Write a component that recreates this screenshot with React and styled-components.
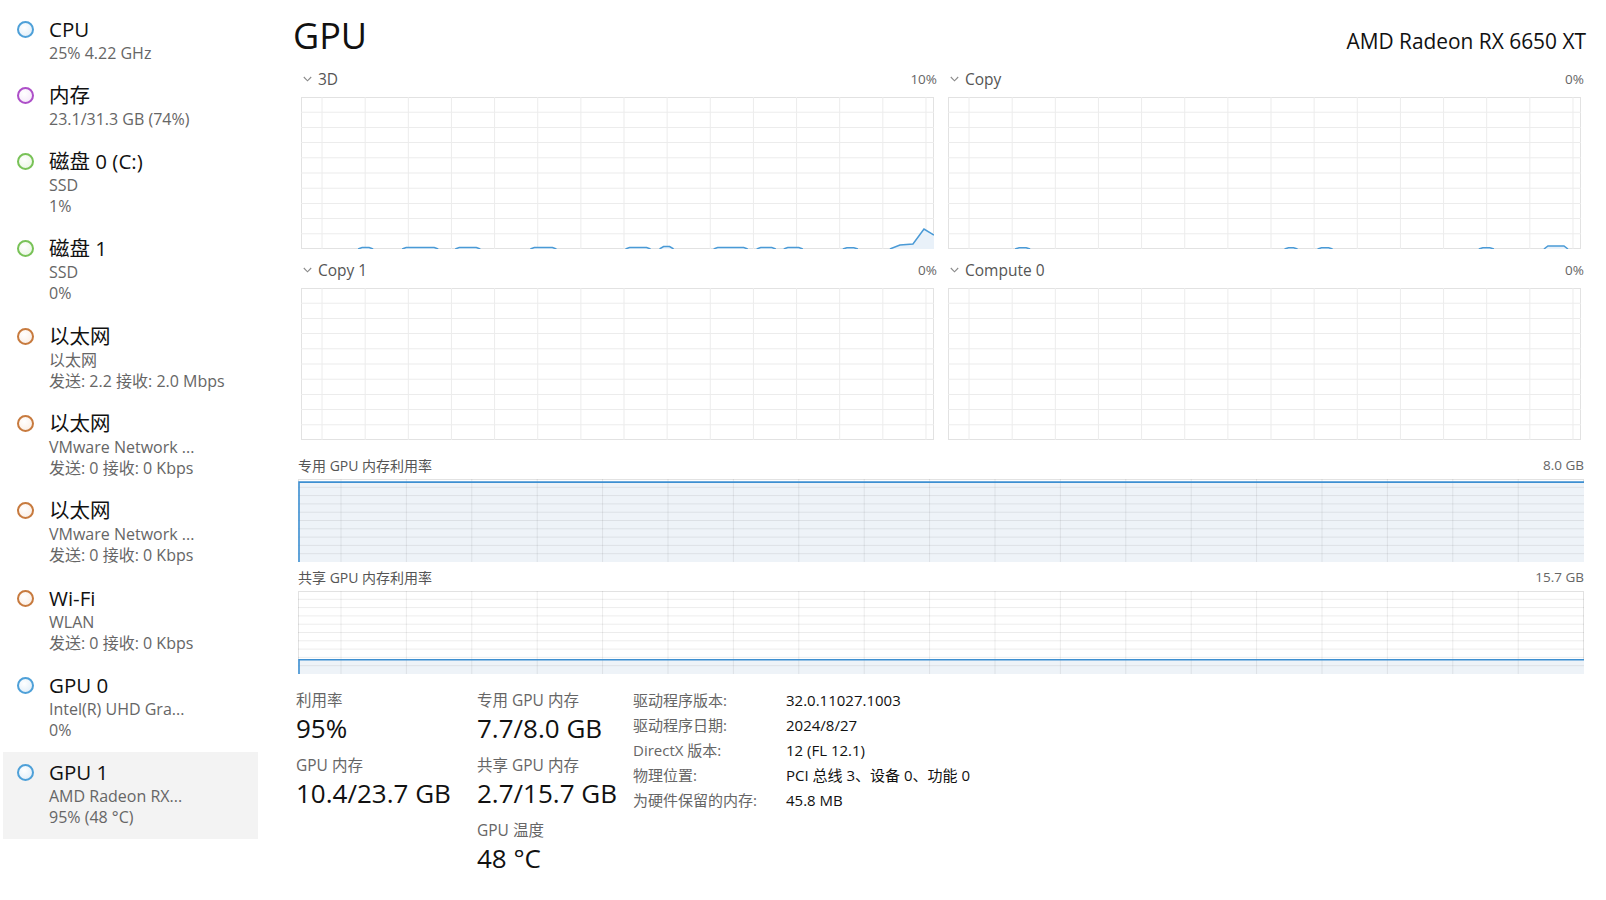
import React from 'react';
import styled, { createGlobalStyle } from 'styled-components';

const FONT = `"Open Sans", "Noto Sans CJK SC", sans-serif`;

const Global = createGlobalStyle`
  html, body { margin: 0; padding: 0; background: #fff; }
  body { font-family: ${FONT}; color: #1a1a1a; }
  * { box-sizing: border-box; }
`;

const Page = styled.div`
  display: flex;
  width: 1606px;
  height: 900px;
  overflow: hidden;
`;

/* ---------- Sidebar ---------- */
const Sidebar = styled.nav`
  width: 258px;
  flex: none;
  padding-top: 8.5px;
  display: flex;
  flex-direction: column;
`;

const Item = styled.div`
  display: flex;
  gap: 15px;
  margin-left: 3px;
  padding: 9px 0 11.3px 14px;
  background: ${(p) => (p.$active ? '#f3f3f3' : 'transparent')};
`;

const Ring = styled.span`
  flex: none;
  width: 17px;
  height: 17px;
  margin-top: 3px;
  border-radius: 50%;
  border: 2px solid ${(p) => p.$stroke};
  background: radial-gradient(circle at 40% 35%, #ffffff 0%, ${(p) => p.$fill} 80%);
`;

const ItemText = styled.div`
  display: flex;
  flex-direction: column;
  min-width: 0;
`;

const ItemTitle = styled.div`
  font-size: 20.5px;
  line-height: 23px;
  color: #111;
  white-space: nowrap;
  margin-bottom: 2px;
`;

const ItemSub = styled.div`
  font-size: 16px;
  line-height: 21px;
  color: #666;
  white-space: nowrap;
`;

/* ---------- Main ---------- */
const Main = styled.main`
  flex: 1;
  min-width: 0;
  padding: 12px 22px 0 40px;
  display: flex;
  flex-direction: column;
`;

const Header = styled.header`
  display: flex;
  justify-content: space-between;
  align-items: baseline;
  height: 58px;
`;

const Title = styled.h1`
  margin: 0 0 0 -5px;
  font-size: 36px;
  line-height: 48px;
  font-weight: 400;
  color: #111;
`;

const DeviceName = styled.div`
  font-size: 20.9px;
  line-height: 28px;
  color: #111;
  margin-right: -2px;
`;

const PanelGrid = styled.div`
  display: grid;
  grid-template-columns: 1fr 1fr;
  column-gap: 11px;
  row-gap: 12px;
  padding-left: 3px;
`;

const Panel = styled.section`
  display: flex;
  flex-direction: column;
`;

const PanelHead = styled.div`
  display: flex;
  align-items: center;
  height: 18px;
  margin-bottom: 9px;
`;

const Chevron = styled.svg`
  width: 9px;
  height: 6px;
  margin-left: 2px;
  margin-right: 6px;
  flex: none;
`;

const PanelName = styled.span`
  font-size: 15.5px;
  color: #555;
  line-height: 18px;
`;

const PanelPct = styled.span`
  margin-left: auto;
  font-size: 13.5px;
  color: #666;
  line-height: 18px;
`;

const ChartBox = styled.div`
  height: ${(p) => p.$h}px;
  margin-right: ${(p) => p.$mr || 0}px;
  svg { display: block; width: 100%; height: 100%; }
`;

const MemHead = styled.div`
  display: flex;
  align-items: center;
  justify-content: space-between;
  height: 18px;
  margin-top: ${(p) => p.$mt}px;
  margin-bottom: 5px;
`;

const MemLabel = styled.span`
  font-size: 14px;
  color: #555;
`;

const MemMax = styled.span`
  font-size: 13.5px;
  color: #666;
`;

/* ---------- Stats ---------- */
const Stats = styled.div`
  display: flex;
  margin-top: 16px;
  margin-left: -2px;
`;

const StatCol = styled.div`
  width: ${(p) => p.$w}px;
  flex: none;
  display: flex;
  flex-direction: column;
`;

const Stat = styled.div`
  margin-bottom: 9px;
`;

const StatLabel = styled.div`
  font-size: 15.5px;
  line-height: 20px;
  color: #666;
  white-space: nowrap;
`;

const StatValue = styled.div`
  font-size: 26px;
  line-height: 36px;
  color: #111;
  white-space: nowrap;
`;

const Details = styled.div`
  display: grid;
  grid-template-columns: 153px auto;
  grid-auto-rows: 24.9px;
  align-items: center;
  margin-top: -2.5px;
`;

const DetailLabel = styled.span`
  font-size: 15px;
  color: #666;
  white-space: nowrap;
`;

const DetailValue = styled.span`
  font-size: 15px;
  color: #111;
  white-space: nowrap;
`;

/* ---------- Charts ---------- */
const GRID = '#ececec';
const LINE = '#4a9ad6';
const FILL = '#e9f1f9';

function SmallChart({ bumps = [], peak }) {
  const W = 632;
  const H = 152;
  const vs = [];
  for (let x = 21; x < W - 2; x += 43.07) vs.push(x);
  const hs = [];
  for (let k = 1; k < 10; k++) hs.push((H / 10) * k);
  return (
    <svg viewBox={`0 0 ${W} ${H}`} preserveAspectRatio="none">
      <rect x="0.5" y="0.5" width={W - 1} height={H - 1} fill="#fff" stroke="#e2e2e2" />
      {vs.map((x) => (
        <line key={'v' + x} x1={x} x2={x} y1="0" y2={H} stroke={GRID} strokeWidth="1" />
      ))}
      {hs.map((y) => (
        <line key={'h' + y} x1="0" x2={W} y1={y} y2={y} stroke={GRID} strokeWidth="1" />
      ))}
      {bumps.map(([a, b, h], i) => {
        const pts = `${a},${H} ${a + 4},${H - h} ${b - 4},${H - h} ${b},${H}`;
        return (
          <g key={i}>
            <polygon points={pts} fill={FILL} />
            <polyline points={pts} fill="none" stroke={LINE} strokeWidth="1.5" />
          </g>
        );
      })}
      {peak && (
        <g>
          <polygon points={`${peak.map((p) => p.join(',')).join(' ')} ${W},${H}`} fill={FILL} />
          <polyline points={peak.map((p) => p.join(',')).join(' ')} fill="none" stroke={LINE} strokeWidth="1.5" />
        </g>
      )}
    </svg>
  );
}

function MemChart({ ratio }) {
  const W = 1286;
  const H = 83;
  const vs = [];
  for (let x = 43; x < W - 2; x += 65.4) vs.push(x);
  const hs = [];
  for (let k = 1; k < 10; k++) hs.push((H / 10) * k);
  const y = H - H * ratio;
  return (
    <svg viewBox={`0 0 ${W} ${H}`} preserveAspectRatio="none">
      <rect x="0.5" y="0.5" width={W - 1} height={H - 1} fill="#fff" stroke="#e2e2e2" />
      <rect x="0" y={y} width={W} height={H - y} fill="#eef3f8" />
      {vs.map((x) => (
        <line key={'v' + x} x1={x} x2={x} y1="0" y2={H} stroke="rgba(0,0,0,0.075)" strokeWidth="1" />
      ))}
      {hs.map((yy) => (
        <line key={'h' + yy} x1="0" x2={W} y1={yy} y2={yy} stroke="rgba(0,0,0,0.075)" strokeWidth="1" />
      ))}
      <polyline points={`1,${H} 1,${y} ${W},${y}`} fill="none" stroke="#3d8fd1" strokeWidth="1.6" />
    </svg>
  );
}

function ChevronIcon() {
  return (
    <Chevron viewBox="0 0 9 6">
      <polyline points="0.8,1 4.5,4.8 8.2,1" fill="none" stroke="#8a8a8a" strokeWidth="1.1" />
    </Chevron>
  );
}

/* ---------- Data ---------- */
const BLUE = ['#4ea0d8', '#e3eff9'];
const PURPLE = ['#ad4fc8', '#f5eafa'];
const GREEN = ['#78c257', '#ebf7e5'];
const ORANGE = ['#c77a3e', '#fbefe6'];

const items = [
  { c: BLUE, t: 'CPU', s: ['25% 4.22 GHz'] },
  { c: PURPLE, t: '内存', s: ['23.1/31.3 GB (74%)'] },
  { c: GREEN, t: '磁盘 0 (C:)', s: ['SSD', '1%'] },
  { c: GREEN, t: '磁盘 1', s: ['SSD', '0%'] },
  { c: ORANGE, t: '以太网', s: ['以太网', '发送: 2.2 接收: 2.0 Mbps'] },
  { c: ORANGE, t: '以太网', s: ['VMware Network ...', '发送: 0 接收: 0 Kbps'] },
  { c: ORANGE, t: '以太网', s: ['VMware Network ...', '发送: 0 接收: 0 Kbps'] },
  { c: ORANGE, t: 'Wi-Fi', s: ['WLAN', '发送: 0 接收: 0 Kbps'] },
  { c: BLUE, t: 'GPU 0', s: ['Intel(R) UHD Gra...', '0%'] },
  { c: BLUE, t: 'GPU 1', s: ['AMD Radeon RX...', '95% (48 °C)'], active: true },
];

const panels = [
  {
    name: '3D',
    pct: '10%',
    bumps: [
      [57, 72, 1.5], [101, 137, 1.5], [154, 179, 1.5], [229, 255, 1.5], [324, 349, 1.5],
      [358, 372, 2.5], [412, 446, 1.5], [455, 474, 1.5], [482, 501, 1.5], [541, 556, 1.2],
    ],
    peak: [[588, 152], [598, 148], [611, 147], [622, 132], [632, 138]],
  },
  {
    name: 'Copy',
    pct: '0%',
    bumps: [[67, 82, 1.2], [336, 349, 1.2], [369, 384, 1.2], [530, 545, 1.2], [595, 619, 3]],
  },
  { name: 'Copy 1', pct: '0%', bumps: [] },
  { name: 'Compute 0', pct: '0%', bumps: [] },
];

const details = [
  ['驱动程序版本:', '32.0.11027.1003'],
  ['驱动程序日期:', '2024/8/27'],
  ['DirectX 版本:', '12 (FL 12.1)'],
  ['物理位置:', 'PCI 总线 3、设备 0、功能 0'],
  ['为硬件保留的内存:', '45.8 MB'],
];

export default function App() {
  return (
    <>
      <Global />
      <Page>
        <Sidebar>
          {items.map((it, i) => (
            <Item key={i} $active={it.active}>
              <Ring $stroke={it.c[0]} $fill={it.c[1]} />
              <ItemText>
                <ItemTitle>{it.t}</ItemTitle>
                {it.s.map((s, j) => (
                  <ItemSub key={j}>{s}</ItemSub>
                ))}
              </ItemText>
            </Item>
          ))}
        </Sidebar>

        <Main>
          <Header>
            <Title>GPU</Title>
            <DeviceName>AMD Radeon RX 6650 XT</DeviceName>
          </Header>

          <PanelGrid>
            {panels.map((p) => (
              <Panel key={p.name}>
                <PanelHead>
                  <ChevronIcon />
                  <PanelName>{p.name}</PanelName>
                  <PanelPct>{p.pct}</PanelPct>
                </PanelHead>
                <ChartBox $h={152} $mr={3}>
                  <SmallChart bumps={p.bumps} peak={p.peak} />
                </ChartBox>
              </Panel>
            ))}
          </PanelGrid>

          <MemHead $mt={16}>
            <MemLabel>专用 GPU 内存利用率</MemLabel>
            <MemMax>8.0 GB</MemMax>
          </MemHead>
          <ChartBox $h={83}>
            <MemChart ratio={7.7 / 8.0} />
          </ChartBox>

          <MemHead $mt={6}>
            <MemLabel>共享 GPU 内存利用率</MemLabel>
            <MemMax>15.7 GB</MemMax>
          </MemHead>
          <ChartBox $h={83}>
            <MemChart ratio={2.7 / 15.7} />
          </ChartBox>

          <Stats>
            <StatCol $w={181}>
              <Stat>
                <StatLabel>利用率</StatLabel>
                <StatValue>95%</StatValue>
              </Stat>
              <Stat>
                <StatLabel>GPU 内存</StatLabel>
                <StatValue>10.4/23.7 GB</StatValue>
              </Stat>
            </StatCol>
            <StatCol $w={156}>
              <Stat>
                <StatLabel>专用 GPU 内存</StatLabel>
                <StatValue>7.7/8.0 GB</StatValue>
              </Stat>
              <Stat>
                <StatLabel>共享 GPU 内存</StatLabel>
                <StatValue>2.7/15.7 GB</StatValue>
              </Stat>
              <Stat>
                <StatLabel>GPU 温度</StatLabel>
                <StatValue>48 °C</StatValue>
              </Stat>
            </StatCol>
            <Details>
              {details.map(([l, v]) => (
                <React.Fragment key={l}>
                  <DetailLabel>{l}</DetailLabel>
                  <DetailValue>{v}</DetailValue>
                </React.Fragment>
              ))}
            </Details>
          </Stats>
        </Main>
      </Page>
    </>
  );
}
